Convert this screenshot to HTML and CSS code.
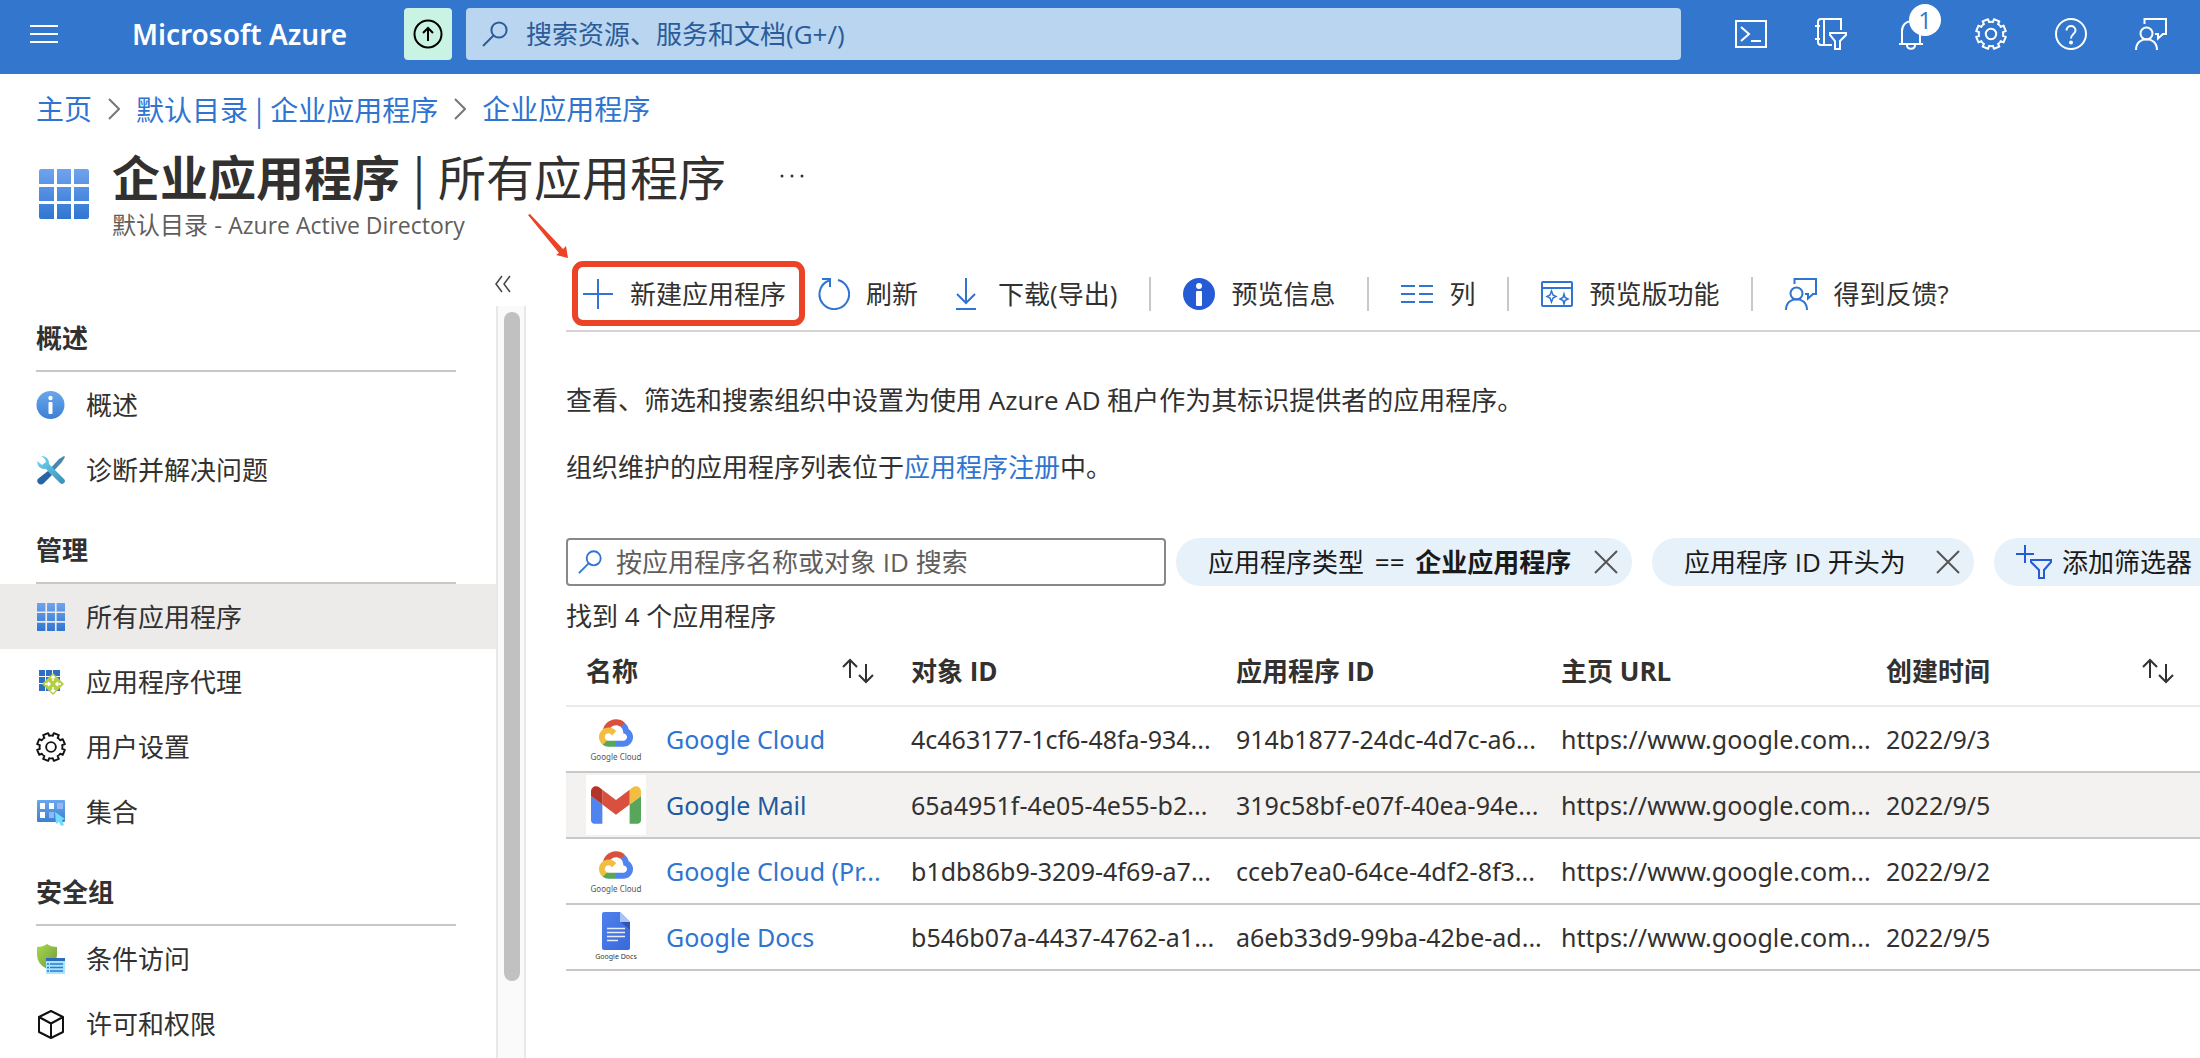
FILE: index.html
```html
<!DOCTYPE html>
<html lang="zh-CN">
<head>
<meta charset="utf-8">
<meta name="viewport" content="width=device-width, initial-scale=1">
<title>企业应用程序 - Microsoft Azure</title>
<link rel="stylesheet" href="styles.css">
</head>
<body>
<svg class="defs" aria-hidden="true">
  <defs>
    <linearGradient id="blueGrid" gradientUnits="userSpaceOnUse" x1="0" y1="0" x2="0" y2="50"><stop offset="0" stop-color="#70a3ee"/><stop offset="1" stop-color="#2f76d2"/></linearGradient>
    <linearGradient id="blueInfo" x1="0" y1="0" x2="0" y2="1"><stop offset="0" stop-color="#69a8ec"/><stop offset="1" stop-color="#3c7fd3"/></linearGradient>
    <linearGradient id="greenShield" x1="0" y1="0" x2="1" y2="1"><stop offset="0" stop-color="#a8d84c"/><stop offset="1" stop-color="#6f9c3c"/></linearGradient>
    <linearGradient id="wrench" x1="0" y1="0" x2="1" y2="1"><stop offset="0" stop-color="#6ed8f5"/><stop offset="1" stop-color="#3b8db8"/></linearGradient>
    <linearGradient id="docBlue" x1="0" y1="0" x2="1" y2="1"><stop offset="0" stop-color="#4d82ee"/><stop offset="1" stop-color="#3a68d8"/></linearGradient>
    <symbol id="gear" viewBox="0 0 32 32">
      <g transform="translate(16 16)" fill="none" stroke="currentColor" stroke-width="2" stroke-linejoin="round">
        <path id="gt" transform="rotate(22.5)" d="M-4.7-11.4L-2.8-11.7L-2.9-14.8H2.9L2.8-11.7L4.7-11.4"/>
        <use href="#gt" transform="rotate(45)"/><use href="#gt" transform="rotate(90)"/><use href="#gt" transform="rotate(135)"/><use href="#gt" transform="rotate(180)"/><use href="#gt" transform="rotate(225)"/><use href="#gt" transform="rotate(270)"/><use href="#gt" transform="rotate(315)"/>
        <circle r="5.2"/>
      </g>
    </symbol>
    <symbol id="grid" viewBox="0 0 50 50">
      <path fill="url(#blueGrid)" d="M2 0H15V15H0V2Q0 0 2 0M18 0H32V15H18ZM35 0H48Q50 0 50 2V15H35ZM0 18H15V32H0ZM18 18H32V32H18ZM35 18H50V32H35ZM0 35H15V50H2Q0 50 0 48ZM18 35H32V50H18ZM35 35H50V48Q50 50 48 50H35Z"/>
    </symbol>
    <symbol id="search" viewBox="0 0 26 26"><g fill="none" stroke="currentColor" stroke-width="2"><circle cx="17" cy="9" r="7.6"/><path d="M11.5 14.5L1 25"/></g></symbol>
    <symbol id="feedback" viewBox="0 0 32 32"><g fill="none" stroke="currentColor" stroke-width="2"><path d="M9.500 6V1H31V16H28L23 20.500V16H20"/><circle cx="11.500" cy="15.500" r="6"/><path d="M1 32C1 17.500 22 17.500 22 32"/></g></symbol>
    <symbol id="cross" viewBox="0 0 24 24"><path d="M1 1L23 23M23 1L1 23" fill="none" stroke="currentColor" stroke-width="2"/></symbol>
    <symbol id="sort" viewBox="0 0 32 26"><path d="M8 20V2M1 9L8 2L15 9M24 6V24M17 17L24 24L31 17" fill="none" stroke="currentColor" stroke-width="2"/></symbol>
    <symbol id="gcloud" viewBox="0 0 256 206">
      <path fill="#d9503f" d="M170.252 56.819l22.253-22.253 1.483-9.37C153.437-11.677 88.976-7.496 52.42 33.92 42.267 45.423 34.734 59.764 30.717 74.573l7.97-1.123 44.505-7.34 3.436-3.513c19.797-21.742 53.27-24.667 76.128-6.168z"/>
      <path fill="#5084ee" d="M224.205 73.918a100.249 100.249 0 0 0-30.217-48.722l-31.232 31.232a55.515 55.515 0 0 1 20.379 44.037v5.544c15.35 0 27.797 12.445 27.797 27.796 0 15.352-12.446 27.573-27.797 27.573h-55.671l-5.466 5.934v33.34l5.466 5.231h55.67c39.93.311 72.553-31.494 72.864-71.424a72.303 72.303 0 0 0-31.793-60.541"/>
      <path fill="#58a55c" d="M71.87 205.796h55.593V161.29H71.87a27.275 27.275 0 0 1-11.4-2.498l-7.887 2.42-22.409 22.253-1.952 7.567c12.567 9.489 27.9 14.825 43.647 14.763"/>
      <path fill="#f2be42" d="M71.87 61.425C31.94 61.664-.237 94.228.001 134.158a72.301 72.301 0 0 0 28.222 56.88l32.248-32.246c-13.99-6.322-20.208-22.786-13.887-36.776 6.32-13.99 22.786-20.208 36.775-13.888a27.796 27.796 0 0 1 13.887 13.888l32.248-32.248A72.224 72.224 0 0 0 71.87 61.425"/>
    </symbol>
  </defs>
</svg>

<header class="topbar">
  <button class="menu-btn" aria-label="菜单"><svg width="28" height="20" viewBox="0 0 28 20"><path d="M0 2H28M0 10H28M0 18H28" stroke="#fff" stroke-width="2"/></svg></button>
  <a class="brand" href="#">Microsoft Azure</a>
  <button class="upgrade" aria-label="升级"><svg width="30" height="30" viewBox="0 0 30 30" fill="none" stroke="#000" stroke-width="2"><circle cx="15" cy="15" r="13.500"/><path d="M15 22V9M10 14L15 9L20 14"/></svg></button>
  <label class="global-search">
    <svg width="26" height="26"><use href="#search"/></svg>
    <input type="text" aria-label="搜索" placeholder="搜索资源、服务和文档(G+/)">
  </label>
  <nav class="top-actions">
    <button aria-label="Cloud Shell"><svg width="32" height="32" viewBox="0 0 32 32" fill="none" stroke="#fff" stroke-width="2"><path d="M1 3H31V29H1Z"/><path d="M6 9L14 16L6 23M16 23H26"/></svg></button>
    <button aria-label="目录筛选"><svg width="32" height="32" viewBox="0 0 32 32" fill="none" stroke="#fff" stroke-width="2"><path d="M26 12V1H6Q3 1 3 4V24Q3 27 6 27H17M9 1V27M0 8H5M0 21H5"/><path d="M15 15H31V17L25 23V31H20V23L15 17Z"/></svg></button>
    <button aria-label="通知"><svg width="32" height="32" viewBox="0 0 32 32" fill="none" stroke="#fff" stroke-width="2"><path d="M4 26H28M7 26V13C7 0 25 0 25 13V26M12 27C12 32 20 32 20 27"/></svg><span class="badge">1</span></button>
    <button aria-label="设置"><svg width="32" height="32"><use href="#gear"/></svg></button>
    <button aria-label="帮助"><svg width="32" height="32" viewBox="0 0 32 32" fill="none" stroke="#fff" stroke-width="2"><circle cx="16" cy="16" r="15"/><path d="M11.500 12.500C11.500 6.500 20.500 6.500 20.500 12.500C20.500 15.500 16 16.500 16 20.500"/><circle cx="16" cy="24.500" r="1" fill="#fff"/></svg></button>
    <button aria-label="反馈"><svg width="32" height="32"><use href="#feedback"/></svg></button>
  </nav>
</header>

<nav class="crumbs" aria-label="导航">
  <a href="#">主页</a>
  <svg width="12" height="22" viewBox="0 0 12 22"><path d="M1 1L11 11L1 21" fill="none" stroke="#777" stroke-width="2"/></svg>
  <a href="#">默认目录 <span class="bar">|</span> 企业应用程序</a>
  <svg width="12" height="22" viewBox="0 0 12 22"><path d="M1 1L11 11L1 21" fill="none" stroke="#777" stroke-width="2"/></svg>
  <a href="#">企业应用程序</a>
</nav>

<div class="heading">
  <svg class="heading-icon" width="50" height="50"><use href="#grid"/></svg>
  <div>
    <div class="title-row">
      <h1><b>企业应用程序</b> <span class="bar">|</span> 所有应用程序</h1>
      <button class="more" aria-label="更多"><svg width="24" height="4" viewBox="0 0 24 4" fill="#333"><circle cx="2" cy="2" r="1.500"/><circle cx="12" cy="2" r="1.500"/><circle cx="22" cy="2" r="1.500"/></svg></button>
    </div>
    <p class="subtitle">默认目录 - <span class="product">Azure Active Directory</span></p>
  </div>
</div>

<div class="workspace">
  <aside class="side">
    <div class="side-top"><button aria-label="折叠"><svg width="18" height="18" viewBox="0 0 18 18"><path d="M8 1L2 9L8 17M16 1L10 9L16 17" fill="none" stroke="#444" stroke-width="1.500"/></svg></button></div>
    <div class="side-body">
      <nav class="side-nav">
        <h2>概述</h2>
        <a href="#"><svg width="30" height="30" viewBox="0 0 30 30"><circle cx="14.500" cy="15" r="14" fill="url(#blueInfo)"/><circle cx="14.500" cy="8" r="2.200" fill="#fff"/><rect x="12.500" y="12" width="4" height="12" rx="1" fill="#fff"/></svg>概述</a>
        <a href="#"><svg width="30" height="30" viewBox="0 0 30 30"><path d="M28 1L29 2L26 7L15 19L12 16L23 4Z" fill="#4b86ad"/><path d="M12 16L16 20L8 28Q5 31 2 28Q0 25 3 23Z" fill="#2763a5"/><path d="M5 1Q13 1 13 9L28 24Q30 26 28 28Q26 30 24 28L10 14Q2 15 1 6L6 10L10 7L9 4Z" fill="url(#wrench)"/></svg>诊断并解决问题</a>
        <h2>管理</h2>
        <a href="#" class="current" aria-current="page"><svg width="30" height="30" viewBox="-1 -1 32 32"><use href="#grid" width="30" height="30"/></svg>所有应用程序</a>
        <a href="#"><svg width="30" height="30" viewBox="0 0 30 30"><path fill="#2e6fc4" d="M3 3H9V9H3ZM10 3H16V9H10ZM17 3H24V9H17ZM3 10H9V16H3ZM10 10H16V16H10ZM17 10H24V16H17ZM3 17H9V24H3ZM10 17H16V24H10ZM17 17H24V24H17Z"/><path fill="#b4cf45" d="M17 6L28 17L17 28L6 17Z"/><path stroke="#fff" stroke-width="1.500" fill="none" d="M17 9V14M17 20V25M9 17H14M20 17H25M15 11L17 9L19 11M15 23L17 25L19 23M12 15L14 17L12 19M22 15L20 17L22 19"/></svg>应用程序代理</a>
        <a href="#"><svg class="ink" width="30" height="30"><use href="#gear"/></svg>用户设置</a>
        <a href="#"><svg width="30" height="30" viewBox="0 0 30 30"><rect x="1" y="3" width="28" height="22" rx="1" fill="url(#blueInfo)"/><path fill="#fff" d="M4 6H9V12H4ZM13 6H18V12H13ZM4 15H9V21H4Z"/><path fill="#8fb8f4" d="M21 6H27V12H21ZM13 15H18V21H13Z"/><path fill="#74dcfb" d="M19 15L29 22L26 23L28 28L25 29L23 25L20 27Z"/></svg>集合</a>
        <h2>安全组</h2>
        <a href="#"><svg width="30" height="30" viewBox="0 0 30 30"><path d="M1 3Q7 3 11 0Q15 3 21 3V11Q21 20 11 25Q1 20 1 11Z" fill="url(#greenShield)"/><rect x="10" y="15" width="19" height="15" fill="#a5e6fb"/><rect x="10" y="14" width="19" height="3" fill="#2c6bc0"/><path stroke="#2f78d2" stroke-width="1.500" d="M11 20H13M14 20H27M11 23.500H13M14 23.500H27M11 27H13M14 27H27"/></svg>条件访问</a>
        <a href="#"><svg width="30" height="30" viewBox="0 0 30 30"><path d="M15 2L27 8V23L15 29L3 23V8ZM3 8L15 14.500L27 8M15 14.500V29" fill="none" stroke="#111" stroke-width="2" stroke-linejoin="round"/></svg>许可和权限</a>
      </nav>
      <div class="scrollbar"><div class="thumb"></div></div>
    </div>
  </aside>

  <main class="main">
    <div class="toolbar">
      <button class="new-app"><svg width="32" height="32" viewBox="0 0 32 32"><path d="M16 1V31M1 16H31" stroke="#2f74d0" stroke-width="2"/></svg>新建应用程序
        <span class="callout"></span>
        <svg class="arrow" width="42" height="46" viewBox="0 0 42 46"><path fill="#ec4326" d="M0 1L2 0L35 35L38 32L40 44L28 41L31 39Z"/></svg>
      </button>
      <button><svg width="32" height="32" viewBox="0 0 32 32" fill="none" stroke="#2f74d0" stroke-width="2"><path d="M20 2A14.800 14.800 0 1 1 11 2.500M4 1H12V9"/></svg>刷新</button>
      <button><svg width="32" height="32" viewBox="0 0 32 32" fill="none" stroke="#2f74d0" stroke-width="2"><path d="M16 0V25M7 16L16 25L25 16M6 31H26"/></svg>下载(导出)</button>
      <span class="sep"></span>
      <button><svg width="32" height="32" viewBox="0 0 32 32"><circle cx="16" cy="16" r="16" fill="#265bd6"/><circle cx="16" cy="8" r="3" fill="#fff"/><rect x="13" y="13" width="6" height="15" rx="1" fill="#fff"/></svg>预览信息</button>
      <span class="sep"></span>
      <button><svg width="32" height="32" viewBox="0 0 32 32"><path d="M0 8H14M18 8H32M0 16H14M18 16H32M0 24H14M18 24H32" stroke="#2f74d0" stroke-width="2"/></svg>列</button>
      <span class="sep"></span>
      <button><svg width="32" height="32" viewBox="0 0 32 32" fill="none" stroke="#2f74d0" stroke-width="2"><rect x="1" y="4" width="30" height="24" rx="1"/><path d="M1 10H31"/><path stroke-width="1.500" d="M10.500 13L12 17L15 18.500L12 20L10.500 24L9 20L6 18.500L9 17ZM23 16L24 19.500L27 21L24 22.500L23 26L22 22.500L19 21L22 19.500Z"/></svg>预览版功能</button>
      <span class="sep"></span>
      <button><svg class="accent" width="32" height="32"><use href="#feedback"/></svg>得到反馈?</button>
    </div>

    <div class="intro">
      <p>查看、筛选和搜索组织中设置为使用 Azure AD 租户作为其标识提供者的应用程序。</p>
      <p>组织维护的应用程序列表位于<a href="#">应用程序注册</a>中。</p>
    </div>

    <div class="filters">
      <label class="app-search">
        <svg class="accent" width="24" height="24"><use href="#search"/></svg>
        <input type="text" aria-label="搜索应用程序" placeholder="按应用程序名称或对象 ID 搜索">
      </label>
      <div class="pill type"><span>应用程序类型 <span class="op">==</span> <b>企业应用程序</b></span><button aria-label="删除"><svg width="24" height="24"><use href="#cross"/></svg></button></div>
      <div class="pill appid"><span>应用程序 ID 开头为</span><button aria-label="删除"><svg width="24" height="24"><use href="#cross"/></svg></button></div>
      <button class="pill add"><svg width="36" height="36" viewBox="0 0 36 36" fill="none" stroke="#265bd6" stroke-width="2"><path d="M9 1V19M0 10H18"/><path d="M15 16H35V18L28 26V34H23V26L15 18Z"/></svg>添加筛选器</button>
    </div>
    <p class="count">找到 4 个应用程序</p>

    <table class="apps">
      <thead>
        <tr>
          <th><div>名称<svg width="32" height="26"><use href="#sort"/></svg></div></th>
          <th>对象 ID</th>
          <th>应用程序 ID</th>
          <th>主页 URL</th>
          <th><div>创建时间<svg width="32" height="26"><use href="#sort"/></svg></div></th>
        </tr>
      </thead>
      <tbody>
        <tr><td><div class="app"><span class="logo cloud"><svg width="34" height="28"><use href="#gcloud"/></svg>Google Cloud</span><a href="#">Google Cloud</a></div></td><td>4c463177-1cf6-48fa-934...</td><td>914b1877-24dc-4d7c-a6...</td><td>https://www.google.com...</td><td>2022/9/3</td></tr>
        <tr class="hover"><td><div class="app"><span class="logo mail"><svg width="50" height="38" viewBox="52 42 88 66"><path fill="#5084ee" d="M58 108h14V74L52 59v43c0 3.320 2.690 6 6 6"/><path fill="#58a55c" d="M120 108h14c3.320 0 6-2.690 6-6V59l-20 15"/><path fill="#f2be42" d="M120 48v26l20-15v-8c0-7.420-8.470-11.650-14.400-7.200"/><path fill="#d9503f" d="M72 74V48l24 18 24-18v26L96 92"/><path fill="#b2342a" d="M52 51v8l20 15V48l-5.600-4.200c-5.940-4.450-14.400-.220-14.400 7.200"/></svg></span><a href="#">Google Mail</a></div></td><td>65a4951f-4e05-4e55-b2...</td><td>319c58bf-e07f-40ea-94e...</td><td>https://www.google.com...</td><td>2022/9/5</td></tr>
        <tr><td><div class="app"><span class="logo cloud"><svg width="34" height="28"><use href="#gcloud"/></svg>Google Cloud</span><a href="#">Google Cloud (Pr...</a></div></td><td>b1db86b9-3209-4f69-a7...</td><td>cceb7ea0-64ce-4df2-8f3...</td><td>https://www.google.com...</td><td>2022/9/2</td></tr>
        <tr><td><div class="app"><span class="logo docs"><svg width="28" height="38" viewBox="0 0 28 38"><path fill="url(#docBlue)" d="M2 0H18L28 10V36Q28 38 26 38H2Q0 38 0 36V2Q0 0 2 0"/><path fill="#a9c3f7" d="M18 0L28 10H18Z"/><path fill="#2f55b0" d="M19 10H28V18Z"/><path stroke="#e6eefc" stroke-width="1.500" d="M5 16.500H23M5 20.500H23M5 24.500H23M5 28.500H16"/></svg>Google Docs</span><a href="#">Google Docs</a></div></td><td>b546b07a-4437-4762-a1...</td><td>a6eb33d9-99ba-42be-ad...</td><td>https://www.google.com...</td><td>2022/9/5</td></tr>
      </tbody>
    </table>
  </main>
</div>
</body>
</html>
```
FILE: styles.css
```css
* { box-sizing: border-box; }

body {
  margin: 0;
  min-height: 100vh;
  display: flex;
  flex-direction: column;
  overflow-x: hidden;
  background: #fff;
  color: #323130;
  font: 26px/36px "Open Sans", "Noto Sans CJK SC", sans-serif;
}

h1, h2, p { margin: 0; }
a { color: #2f74d0; text-decoration: none; }
svg { display: block; flex: none; }
.defs { position: absolute; width: 0; height: 0; }
.accent { color: #2f74d0; }
.ink { color: #111; }
.bar { font-family: "Noto Sans CJK SC", sans-serif; }

button {
  padding: 0;
  border: 0;
  background: none;
  color: inherit;
  font: inherit;
  white-space: nowrap;
}

input {
  flex: 1;
  min-width: 0;
  padding: 0;
  border: 0;
  outline: 0;
  background: none;
  color: inherit;
  font: inherit;
}
input::placeholder { color: inherit; opacity: 1; }

/* Top bar */
.topbar {
  display: flex;
  align-items: center;
  height: 74px;
  padding: 0 9px 6px 30px;
  background: #3376cd;
  color: #fff;
}
.brand {
  width: 272px;
  margin-left: 74px;
  color: #fff;
  font: 600 28px/36px "Noto Sans", sans-serif;
  white-space: nowrap;
}
.upgrade {
  display: grid;
  place-items: center;
  width: 48px;
  height: 52px;
  border-radius: 4px;
  background: #c9f3e3;
}
.global-search {
  display: flex;
  flex: 1;
  align-items: center;
  gap: 18px;
  height: 52px;
  margin: 0 30px 0 14px;
  padding: 0 16px;
  border-radius: 4px;
  background: #b9d5f0;
  color: #2b5c99;
}
.top-actions { display: flex; }
.top-actions button {
  position: relative;
  display: grid;
  place-items: center;
  width: 80px;
  height: 52px;
}
.badge {
  position: absolute;
  top: -4px;
  left: 38px;
  width: 32px;
  height: 32px;
  border-radius: 50%;
  background: #fff;
  color: #3376cd;
  font-size: 24px;
  line-height: 32px;
}

/* Breadcrumb and page heading */
.crumbs {
  display: flex;
  align-items: center;
  gap: 16px;
  height: 70px;
  padding-left: 36px;
  font-size: 28px;
}
.heading {
  display: flex;
  align-items: center;
  gap: 23px;
  padding: 0 0 2px 39px;
}
.heading-icon { margin-top: 2px; }
.title-row { display: flex; align-items: center; gap: 54px; height: 64px; }
h1 { font-size: 48px; line-height: 64px; font-weight: 400; }
.subtitle { color: #605e5c; font-size: 24px; line-height: 34px; }
.product { font-size: 23px; }

/* Sidebar */
.workspace { display: flex; flex: 1; }
.side { display: flex; flex: none; flex-direction: column; width: 526px; }
.side-top { display: flex; justify-content: flex-end; height: 62px; padding: 31px 14px 0 0; }
.side-top button { height: 18px; }
.side-body { display: flex; flex: 1; }
.side-nav { width: 496px; margin-top: -16px; }
.side-nav h2 {
  height: 82px;
  margin: 0 40px 0 36px;
  padding-top: 30px;
  border-bottom: 2px solid #c8c8c8;
  font-size: 26px;
  line-height: 36px;
}
.side-nav a {
  display: flex;
  align-items: center;
  gap: 20px;
  height: 65px;
  padding-left: 36px;
  color: #323130;
}
.side-nav .current { background: #edebe9; }
.scrollbar {
  width: 30px;
  padding: 6px;
  border: solid #e8e8e8;
  border-width: 0 2px;
  background: #fafafa;
}
.thumb { width: 16px; height: 669px; border-radius: 8px; background: #c1c1c1; }

/* Main column */
.main { flex: 1; min-width: 0; padding-left: 40px; }
.toolbar {
  display: flex;
  align-items: center;
  gap: 32px;
  height: 88px;
  padding: 14px 0 0 16px;
  border-bottom: 2px solid #d4d4d4;
}
.toolbar button { position: relative; display: flex; align-items: center; gap: 16px; }
.sep { width: 2px; height: 34px; background: #c8c8c8; }
.callout {
  position: absolute;
  inset: -15px -19px -14px -10px;
  border: 6px solid #ec4326;
  border-radius: 11px;
}
.arrow { position: absolute; top: -62px; left: -54px; }

.intro { padding-top: 50px; }
.intro p { margin-bottom: 31px; }
.filters { display: flex; height: 48px; margin-top: 53px; white-space: nowrap; overflow: hidden; }
.app-search {
  display: flex;
  flex: none;
  align-items: center;
  gap: 14px;
  width: 600px;
  padding: 0 10px;
  border: 2px solid #8a8886;
  border-radius: 4px;
  color: #605e5c;
}
.pill {
  display: flex;
  flex: none;
  align-items: center;
  justify-content: space-between;
  margin-right: 20px;
  padding: 0 14px 0 32px;
  border-radius: 24px;
  background: #e7f1fa;
  color: #1b1a19;
}
.pill button { color: #555; }
.op { margin: 0 4px; }
.type { width: 456px; margin-left: 10px; }
.appid { width: 322px; }
.add { width: 240px; justify-content: flex-start; gap: 10px; padding-left: 22px; }
.count { margin-top: 12px; }

/* Application list */
.apps { width: 100%; margin-top: 3px; border-collapse: collapse; table-layout: fixed; }
.apps th, .apps td { padding: 0 0 0 20px; text-align: left; white-space: nowrap; }
.apps th { height: 69px; border-bottom: 2px solid #eaeaea; }
.apps th div { display: flex; align-items: center; justify-content: space-between; padding-right: 17px; }
.apps th:last-child div { padding-right: 26px; }
.apps th:not(:last-child) { width: 325px; }
.apps td { height: 66px; border-bottom: 2px solid #c8c8c8; font: 25px/36px "Noto Sans", sans-serif; }
.hover { background: #f3f2f1; }
.hover a { color: #215a9e; }
.app { display: flex; align-items: center; gap: 20px; }
.logo {
  display: flex;
  flex: none;
  flex-direction: column;
  align-items: center;
  width: 60px;
  height: 60px;
  background: #fff;
  color: #555;
  font-size: 8px;
  line-height: 12px;
}
.cloud { padding-top: 10px; gap: 4px; }
.mail { justify-content: center; }
.docs { padding-top: 5px; gap: 1px; color: #333; font-size: 7px; }
```
